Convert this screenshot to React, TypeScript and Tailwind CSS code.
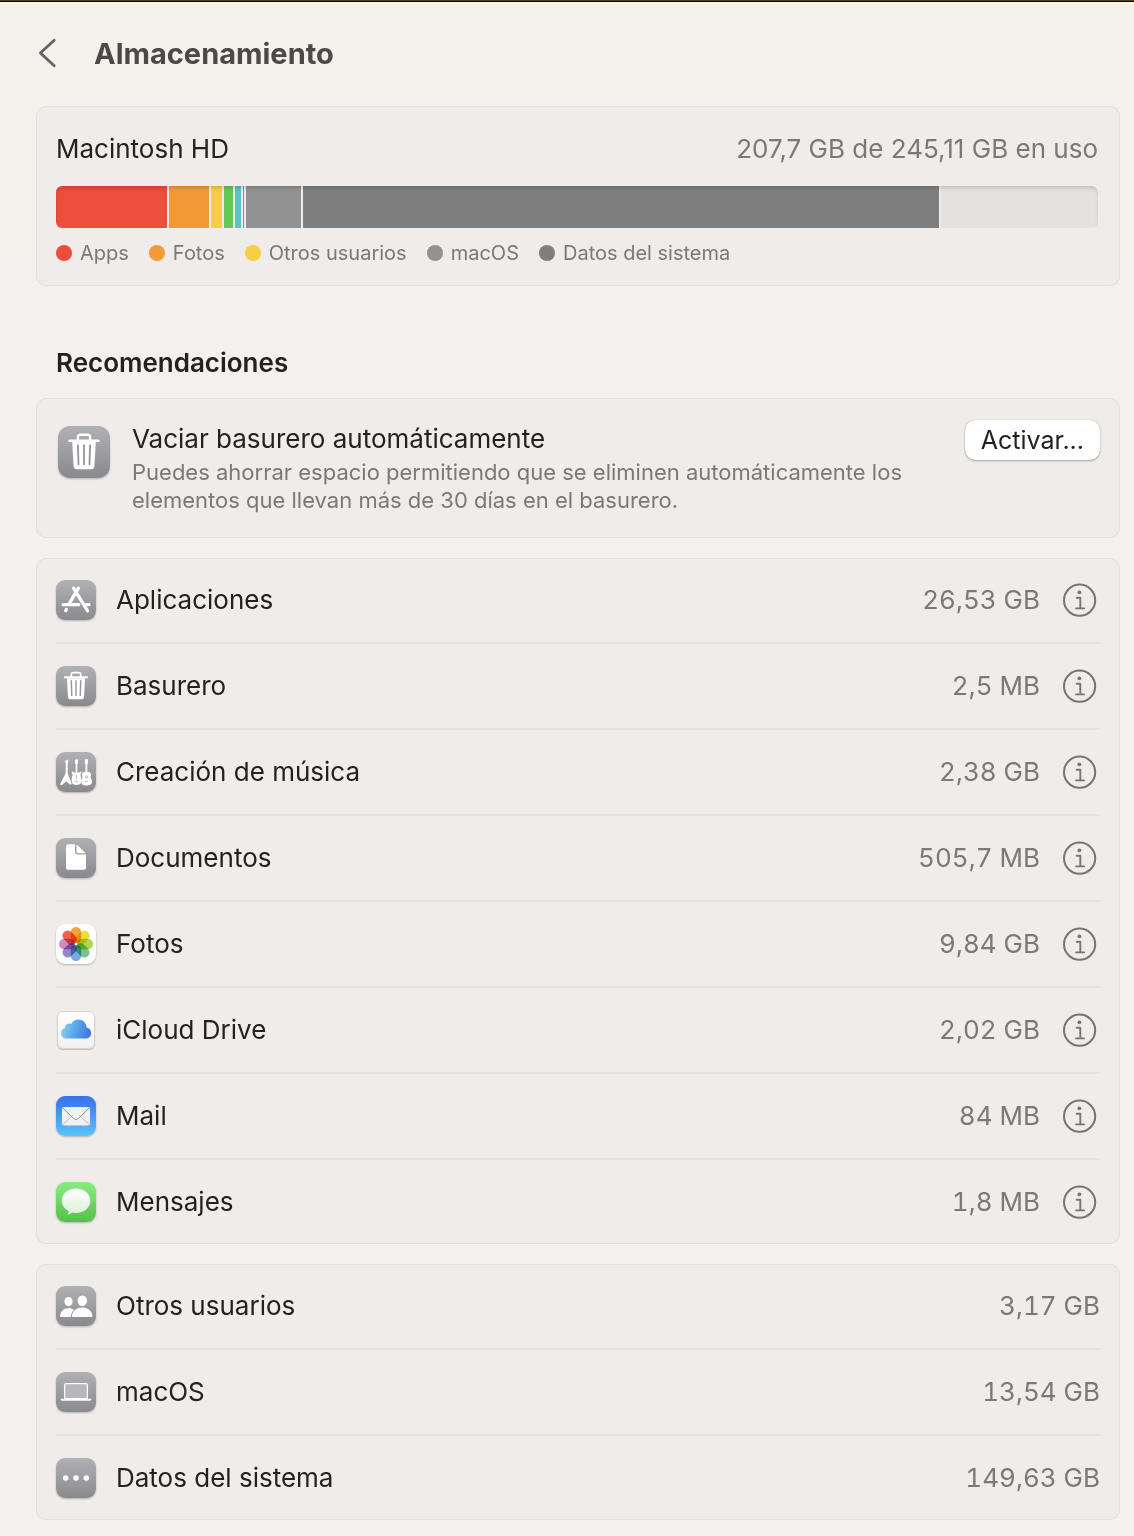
import type { ReactNode } from "react";

const segments = [
  { name: "Apps", size: 111, color: "bg-[#eb4e3d]" },
  { name: "Fotos", size: 40, color: "bg-[#f19a37]" },
  { name: "Otros usuarios", size: 11, color: "bg-[#f7ce46]" },
  { name: "Mensajes", size: 9, color: "bg-[#65c956]" },
  { name: "Música", size: 6, color: "bg-[#5bc2bd]" },
  { name: "Mail", size: 1, color: "bg-[#5a9bb0]" },
  { name: "macOS", size: 55, color: "bg-[#929292]" },
  { name: "Datos del sistema", size: 636, color: "bg-[#7f7f7f]" },
  { name: "Disponible", size: 157, color: "bg-[#e5e1de]" },
];

const legend = [
  { name: "Apps", color: "bg-[#eb4e3d]" },
  { name: "Fotos", color: "bg-[#f19a37]" },
  { name: "Otros usuarios", color: "bg-[#f7ce46]" },
  { name: "macOS", color: "bg-[#929292]" },
  { name: "Datos del sistema", color: "bg-[#7f7f7f]" },
];

const grayTile = "rounded-[9px] bg-linear-to-b from-[#b1b0b4] to-[#8a898e]";

const Tile = ({ className, children }: { className: string; children: ReactNode }) => (
  <span className={`block size-10 shrink-0 shadow-[0_1px_2px_rgba(0,0,0,0.25)] ${className}`}>
    <svg viewBox="0 0 40 40" className="size-full" aria-hidden="true">
      {children}
    </svg>
  </span>
);

const TrashGlyph = () => (
  <>
    <path d="M15.3 11V8.6c0-1.2.7-1.9 1.900-1.900h5.600c1.200 0 1.900.7 1.900 1.900V11" fill="none" stroke="#fff" strokeWidth="1.8" />
    <path d="M8.800 11.300h22.400" stroke="#fff" strokeWidth="1.9" strokeLinecap="round" />
    <path d="M10.900 12.200h18.200l-1.100 18.700c-.1 1.500-.9 2.300-2.300 2.300H14.300c-1.400 0-2.200-.8-2.300-2.300z" fill="#fff" />
    <path d="M15.300 14.800l.5 14.600M20 14.800v14.600M24.700 14.800l-.5 14.600" stroke="#97969b" strokeWidth="1.4" strokeLinecap="round" />
  </>
);

const AppsIcon = () => (
  <Tile className={grayTile}>
    <g fill="none" stroke="#fff" strokeWidth="3.3" strokeLinecap="round">
      <path d="M22.400 8.200l-8.800 15" />
      <path d="M17.600 8.200l14 22.600" />
      <path d="M7.200 24.600h15.600M29.600 24.600h3.400" />
      <path d="M10.400 29.400l-.7 1.200" />
    </g>
  </Tile>
);

const TrashIcon = () => (
  <Tile className={grayTile}>
    <TrashGlyph />
  </Tile>
);

const GuitarsIcon = () => (
  <Tile className={grayTile}>
    <g fill="#fff">
      <path d="M8.200 9.600l3.600-2.200.5 1.200-.6 4.400.1 8.400 3.600 9.600c.4 1.400-.9 2-2 1l-3.400-2.400-3.700 3.200c-1.200.9-2.400.2-1.900-1.200l5.200-10.400.2-8.200-.3-3.200z" />
      <path d="M19 7.400h3v3.800l-.7 1v8.400c1.400.4 2.600-.8 3.900-1.400.9.9-.4 2.500-.8 4 1.400 2.400 1.600 6.200.2 8.300-1.200 1.900-7 1.900-8.200 0-1.300-2.100-1-5.900.4-8.300-.6-1.500-1.600-3-.8-4 1.400.6 2.300 1.700 3.700 1.400v-8.400l-.7-1z" />
      <path d="M28.800 7.200h3.200v4l-.7 1v7.600c2.400 0 3.700 1.200 3.700 3 0 1.400-.6 1.800-.5 2.700.2 1 1.500 1.700 1.500 3.900 0 3-2.200 4-5.500 4s-5.200-1-5.200-4c0-2.200 1.300-2.900 1.300-3.900 0-.9-.8-1.300-.8-2.700 0-1.800 1.300-3 3.700-3v-7.600l-.7-1z" />
    </g>
    <g fill="none" stroke="#a8a7ab">
      <path d="M20.500 22.500v5" strokeWidth=".6" />
      <circle cx="30.500" cy="24.800" r="1.100" strokeWidth=".8" />
      <path d="M28.900 29.400h3.200M18.900 29.600h3.200" strokeWidth=".7" />
    </g>
  </Tile>
);

const DocumentIcon = () => (
  <Tile className={grayTile}>
    <path d="M19 6.200v7.400c0 2 .9 3 2.900 3H30v12.600c0 1.800-.9 2.600-2.600 2.600H12.600c-1.800 0-2.600-.9-2.600-2.600V8.800c0-1.800.8-2.600 2.600-2.600z" fill="#fff" />
    <path d="M20.600 6.600l9.200 8.600h-7.600c-1.100 0-1.600-.5-1.600-1.600z" fill="#fff" />
  </Tile>
);

const petals = ["#f7a13a", "#ecdf3a", "#b4d44e", "#74c58a", "#74aee2", "#9389c8", "#cf8dbd", "#f2604f"];

const PhotosIcon = () => (
  <Tile className="rounded-[9px] bg-[#fdfdfd]">
    <g className="isolate">
      {petals.map((color, index) => (
        <rect
          key={color}
          x="14.8"
          y="3"
          width="10.4"
          height="16"
          rx="5.2"
          fill={color}
          className="mix-blend-multiply"
          transform={`rotate(${index * 45} 20 20)`}
        />
      ))}
    </g>
    <circle cx="20" cy="20" r="1.2" fill="#fff" />
  </Tile>
);

const CloudIcon = () => (
  <span className="flex size-10 shrink-0 items-center justify-center">
    <span className="block size-[38px] rounded-[6px] border border-[#d4d2d1] bg-linear-to-b from-white to-[#f1f1f1] shadow-[0_1px_1px_rgba(0,0,0,0.2)]">
      <svg viewBox="2 2 36 36" className="size-full" aria-hidden="true">
        <defs>
          <linearGradient id="cloud-fill" x1="0" y1="0.4" x2="1" y2="0.6">
            <stop offset="0" stopColor="#92d0ee" />
            <stop offset="0.45" stopColor="#5ba9ea" />
            <stop offset="1" stopColor="#3f76de" />
          </linearGradient>
        </defs>
        <path
          d="M10.600 28.600C7.300 28.600 5 26.200 5 23.200c0-2.600 1.600-4.500 3.800-5.100-.2-3.300 3.600-5.600 6.400-4.100 1.400-2.700 4-4.400 7.200-4.400 4.500 0 7.900 3.300 8.200 7.900 2.700.5 4.600 2.700 4.600 5.400 0 3.200-2.500 5.700-5.800 5.700z"
          fill="url(#cloud-fill)"
        />
      </svg>
    </span>
  </span>
);

const MailIcon = () => (
  <Tile className="rounded-[9px] bg-linear-to-b from-[#3a6fe8] to-[#5cc3f8]">
    <rect x="6" y="11" width="28" height="18.4" rx="1.6" fill="#f1f1f2" />
    <path d="M6.800 28.600l10-9.400M33.200 28.600l-10-9.400" stroke="#a5a7ab" strokeWidth="0.8" fill="none" />
    <path d="M6.800 11.900l10.600 10.400c1.600 1.500 3.600 1.500 5.200 0l10.600-10.400" stroke="#8d9096" strokeWidth="1" fill="none" />
  </Tile>
);

const MessagesIcon = () => (
  <Tile className="rounded-[9px] bg-linear-to-b from-[#88ee80] to-[#57bf4b]">
    <defs>
      <linearGradient id="bubble-fill" x1="0" y1="0" x2="0" y2="1">
        <stop offset="0" stopColor="#fdfffd" />
        <stop offset="1" stopColor="#dcf1d9" />
      </linearGradient>
    </defs>
    <path
      d="M20 6.600c8 0 14.300 5.300 14.300 12.100S28 30.900 20 30.900c-1.400 0-2.800-.2-4.100-.5-1.200 1.300-2.800 2.100-4.700 2.200.9-1 1.500-2.200 1.500-3.700-4.200-2.100-7-5.900-7-10.200C5.700 11.900 12 6.600 20 6.600z"
      fill="url(#bubble-fill)"
    />
  </Tile>
);

const UsersIcon = () => (
  <Tile className={grayTile}>
    <g fill="#fff">
      <ellipse cx="12.5" cy="15.6" rx="4.1" ry="4.600" />
      <ellipse cx="26.300" cy="14.8" rx="4.700" ry="5.200" />
      <path d="M4 30.600c0-5 3.800-8.400 8.500-8.400 2.200 0 4.100.6 5.600 1.800-2 1.700-3.200 3.800-3.300 6.900H4.300z" />
      <path d="M16.400 30.900c-.5 0-.7-.3-.6-.8.500-5 4.700-8.700 10.500-8.700S36.100 25.100 36.500 30c0 .6-.2.900-.7.900z" />
    </g>
  </Tile>
);

const LaptopIcon = () => (
  <Tile className={grayTile}>
    <rect x="8.600" y="11.700" width="22.800" height="15" rx="1.500" fill="#b7b6ba" stroke="#fff" strokeWidth="1.300" />
    <path d="M4.700 26.800h30.600v.4c0 .9-.6 1.500-1.500 1.500H6.200c-.9 0-1.500-.6-1.500-1.500z" fill="#fff" />
  </Tile>
);

const DotsIcon = () => (
  <Tile className={grayTile}>
    <g fill="#fff">
      <circle cx="9.700" cy="20" r="2.800" />
      <circle cx="20" cy="20" r="2.800" />
      <circle cx="30.300" cy="20" r="2.800" />
    </g>
  </Tile>
);

const InfoButton = ({ label }: { label: string }) => (
  <button type="button" aria-label={`Información de ${label}`} className="ml-5 flex size-10 items-center justify-center">
    <svg viewBox="0 0 34 34" className="size-[34px]" fill="none" stroke="#777573" aria-hidden="true">
      <circle cx="16.6" cy="17.2" r="15.600" strokeWidth="2" />
      <circle cx="16.4" cy="9.300" r="1.900" fill="#777573" stroke="none" />
      <path d="M13.700 14.700h3.600v10.400M13.100 25.400h8" strokeWidth="1.900" strokeLinecap="round" strokeLinejoin="round" />
    </svg>
  </button>
);

const categories = [
  { name: "Aplicaciones", size: "26,53 GB", icon: <AppsIcon /> },
  { name: "Basurero", size: "2,5 MB", icon: <TrashIcon /> },
  { name: "Creación de música", size: "2,38 GB", icon: <GuitarsIcon /> },
  { name: "Documentos", size: "505,7 MB", icon: <DocumentIcon /> },
  { name: "Fotos", size: "9,84 GB", icon: <PhotosIcon /> },
  { name: "iCloud Drive", size: "2,02 GB", icon: <CloudIcon /> },
  { name: "Mail", size: "84 MB", icon: <MailIcon /> },
  { name: "Mensajes", size: "1,8 MB", icon: <MessagesIcon /> },
];

const systemCategories = [
  { name: "Otros usuarios", size: "3,17 GB", icon: <UsersIcon /> },
  { name: "macOS", size: "13,54 GB", icon: <LaptopIcon /> },
  { name: "Datos del sistema", size: "149,63 GB", icon: <DotsIcon /> },
];

const Card = ({ className = "", children }: { className?: string; children: ReactNode }) => (
  <section className={`rounded-[10px] bg-[#f0ece9] px-5 inset-ring-1 inset-ring-[#e3dfdc] ${className}`}>{children}</section>
);

type Category = { name: string; size: string; icon: ReactNode };

const CategoryList = ({ items, withInfo = false }: { items: Category[]; withInfo?: boolean }) => (
  <ul className="divide-y-2 divide-[#e4e0dd]">
    {items.map((item) => (
      <li key={item.name} className="flex items-center py-[22px]">
        {item.icon}
        <span className="ml-5 flex-1 leading-10">{item.name}</span>
        <span className="leading-10 text-[#7b7876] tabular-nums">{item.size}</span>
        {withInfo && <InfoButton label={item.name} />}
      </li>
    ))}
  </ul>
);

export default function App() {
  return (
    <main className="min-h-screen border-t border-[#4f4112] bg-linear-to-b from-[#f5f1eb] to-[#f4f0ed] to-20% pt-px pr-3.5 pb-4 pl-9 font-[Inter,'Liberation_Sans',sans-serif] text-[26px] text-[#232221] inset-shadow-[0_1px_0_#0f0c04]">
      <header className="flex h-[104px] items-start pt-8">
        <button type="button" aria-label="Atrás" className="flex h-[38px] w-6 items-center justify-center">
          <svg viewBox="0 0 24 38" className="h-[38px] w-6" fill="none" stroke="#656361" strokeWidth="2.8" strokeLinecap="round" strokeLinejoin="round" aria-hidden="true">
            <path d="M18.200 6.200L4.400 19l13.800 12.800" />
          </svg>
        </button>
        <h1 className="ml-[34px] text-[29px] leading-10 font-bold text-[#4b4a47]">Almacenamiento</h1>
      </header>

      <Card className="pt-7 pb-5">
        <div className="mr-0.5 flex justify-between leading-[30px]">
          <h2>Macintosh HD</h2>
          <p className="text-[#7b7876]">207,7 GB de 245,11 GB en uso</p>
        </div>
        <div className="relative mt-[22px] mr-0.5 flex h-[42px] gap-0.5 overflow-hidden rounded-[6px]">
          {segments.map((segment) => (
            <div key={segment.name} className={`basis-0 ${segment.color}`} style={{ flexGrow: segment.size }} />
          ))}
          {/* Inner shade over the whole bar */}
          <div className="absolute inset-0 rounded-[6px] shadow-[inset_0_3px_4px_-1px_rgba(0,0,0,0.16)]" />
        </div>
        <ul className="mt-3 flex gap-5 text-[20px] leading-[26px] text-[#7b7876]">
          {legend.map((item) => (
            <li key={item.name} className="flex items-center gap-2">
              <span className={`size-4 rounded-full ${item.color}`} />
              {item.name}
            </li>
          ))}
        </ul>
      </Card>

      <h2 className="mt-15 mb-[18px] ml-5 leading-[34px] font-semibold">Recomendaciones</h2>

      <Card className="flex items-start py-6">
        <span className="mt-1 ml-0.5 block size-[52px] shrink-0 rounded-xl bg-linear-to-b from-[#b1b0b4] to-[#8a898e] shadow-[0_1px_2px_rgba(0,0,0,0.25)]">
          <svg viewBox="0 0 40 40" className="size-full" aria-hidden="true">
            <TrashGlyph />
          </svg>
        </span>
        <div className="ml-[22px] flex-1">
          <h3 className="leading-[34px]">Vaciar basurero automáticamente</h3>
          <p className="mt-0.5 max-w-[800px] text-[22px] leading-7 text-[#7b7876]">
            Puedes ahorrar espacio permitiendo que se eliminen automáticamente los elementos que llevan más de 30 días en el basurero.
          </p>
        </div>
        <button type="button" className="-mt-0.5 h-10 rounded-[10px] bg-white px-4 text-[25px] leading-[38px] shadow-[0_0_1px_rgba(0,0,0,0.3),0_1px_2px_rgba(0,0,0,0.3)]">
          Activar...
        </button>
      </Card>

      <Card className="mt-5">
        <CategoryList items={categories} withInfo />
      </Card>

      <Card className="mt-5">
        <CategoryList items={systemCategories} />
      </Card>
    </main>
  );
}
